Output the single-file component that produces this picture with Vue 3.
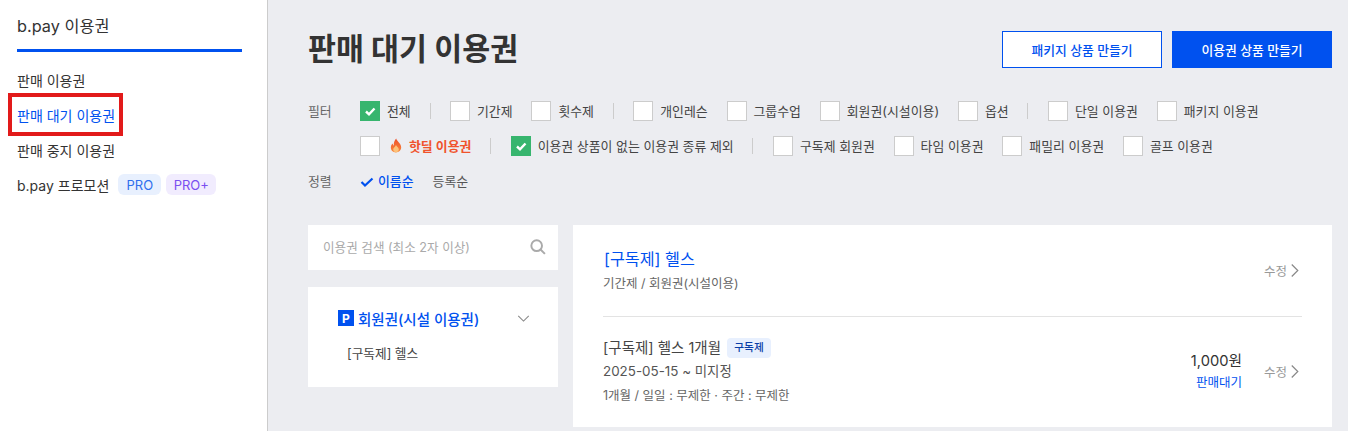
<script setup>
const row1 = [
  { label: '전체', on: true, sep: true },
  { label: '기간제' },
  { label: '횟수제', sep: true },
  { label: '개인레슨' },
  { label: '그룹수업' },
  { label: '회원권(시설이용)' },
  { label: '옵션', sep: true },
  { label: '단일 이용권' },
  { label: '패키지 이용권' },
]
const row2 = [
  { label: '이용권 상품이 없는 이용권 종류 제외', on: true, sep: true },
  { label: '구독제 회원권' },
  { label: '타임 이용권' },
  { label: '패밀리 이용권' },
  { label: '골프 이용권' },
]
</script>

<template>
  <div class="page">
    <aside class="side">
      <h2 class="side-title">b.pay 이용권</h2>
      <nav class="side-nav">
        <a class="nav-item">판매 이용권</a>
        <a class="nav-item active">판매 대기 이용권</a>
        <a class="nav-item">판매 중지 이용권</a>
        <a class="nav-item">b.pay 프로모션
          <span class="pill pro">PRO</span><span class="pill plus">PRO+</span>
        </a>
      </nav>
    </aside>
    <main class="main">
      <header class="head">
        <h1 class="title">판매 대기 이용권</h1>
        <div class="actions">
          <button class="btn outline">패키지 상품 만들기</button>
          <button class="btn solid">이용권 상품 만들기</button>
        </div>
      </header>

      <section class="filters">
        <div class="frow">
          <span class="flabel">필터</span>
          <template v-for="f in row1" :key="f.label">
            <label class="chk"><i class="box" :class="{ on: f.on }"><svg v-if="f.on" viewBox="0 0 20 20"><path d="M6 10.500 9 13.300 14.500 7.500" /></svg></i>{{ f.label }}</label>
            <i v-if="f.sep" class="sep"></i>
          </template>
        </div>
        <div class="frow">
          <span class="flabel"></span>
          <label class="chk hot">
            <i class="box"></i>
            <svg class="fire" viewBox="1 0 12 16">
              <defs>
                <linearGradient id="flame" x1="0" y1="0" x2="0" y2="1">
                  <stop offset="0" stop-color="#ee4f2a"/>
                  <stop offset="1" stop-color="#f98a3c"/>
                </linearGradient>
              </defs>
              <path d="M7.200.6c.5 2.600 4.800 4.800 5.300 9 .3 3.300-2.500 5.800-5.600 5.800C3.800 15.400 1.300 13 1.500 9.900c.1-1.700 1-3.100 1.900-4 .1 1.100.5 1.900 1.200 2.300C4.500 5.300 5.300 2.500 7.200.6Z" fill="url(#flame)"/>
              <path d="M7 7.500c.3 1.300 3 2.600 3 4.800 0 1.600-1.400 2.900-3 2.900s-3-1.300-3-2.900C4 10.500 6.300 9.400 7 7.500Z" fill="#fcc27a"/>
            </svg>
            <b>핫딜 이용권</b>
          </label>
          <i class="sep"></i>
          <template v-for="f in row2" :key="f.label">
            <label class="chk"><i class="box" :class="{ on: f.on }"><svg v-if="f.on" viewBox="0 0 20 20"><path d="M6 10.500 9 13.300 14.500 7.500" /></svg></i>{{ f.label }}</label>
            <i v-if="f.sep" class="sep"></i>
          </template>
        </div>
        <div class="frow">
          <span class="flabel">정렬</span>
          <span class="sort active"><svg viewBox="0 0 14 12"><path d="M1.500 6 5 9.500 12.500 2.500" /></svg>이름순</span>
          <span class="sort">등록순</span>
        </div>
      </section>

      <section class="body">
        <div class="left">
          <div class="search">
            <span>이용권 검색 (최소 2자 이상)</span>
            <svg viewBox="0 0 18 18"><circle cx="7.500" cy="7.500" r="6"/><path d="M11.800 11.800 16.800 16.800"/></svg>
          </div>
          <div class="tree">
            <div class="tree-head">
              <span class="p">P</span><span class="tree-name">회원권(시설 이용권)</span>
              <svg class="chev" viewBox="0 0 14 8"><path d="M1 1 7 7 13 1"/></svg>
            </div>
            <div class="tree-item">[구독제] 헬스</div>
          </div>
        </div>
        <div class="card">
          <div class="card-top">
            <div>
              <h3 class="card-title">[구독제] 헬스</h3>
              <p class="card-sub">기간제 / 회원권(시설이용)</p>
            </div>
            <a class="edit">수정<svg viewBox="0 0 8 14"><path d="M.5.5 7 7 .5 13.500"/></svg></a>
          </div>
          <div class="card-row">
            <div class="info">
              <div class="name">[구독제] 헬스 1개월<span class="tag">구독제</span></div>
              <div class="date">2025-05-15 ~ 미지정</div>
              <div class="limit">1개월 / 일일 : 무제한 · 주간 : 무제한</div>
            </div>
            <div class="price">
              <strong>1,000원</strong>
              <span>판매대기</span>
            </div>
            <a class="edit">수정<svg viewBox="0 0 8 14"><path d="M.5.5 7 7 .5 13.500"/></svg></a>
          </div>
        </div>
      </section>
    </main>
  </div>
</template>

<style>
html, body { margin: 0; background: #ecedf1; }
</style>

<style scoped>
* { box-sizing: border-box; }
.page {
  display: flex;
  width: 1348px;
  height: 431px;
  overflow: hidden;
  font-family: Inter, "Noto Sans CJK KR", sans-serif;
  color: #333;
  background: #ecedf1;
}
.side {
  width: 268px;
  flex: none;
  background: #fff;
  border-right: 1px solid #ccc;
  padding: 0 25px 0 17px;
}
.side-title {
  margin: 0;
  height: 52px;
  border-bottom: 3px solid #0051ef;
  font-size: 16.3px;
  font-weight: 400;
  line-height: 52px;
}
.side-nav { display: flex; flex-direction: column; margin-top: 10px; }
.nav-item {
  height: 35px;
  display: flex;
  align-items: center;
  font-size: 14px;
  white-space: nowrap;
}
.nav-item.active {
  color: #0051ef;
  outline: 4px solid #e21a1a;
  width: 107px;
  margin-left: -5px;
  padding-left: 5px;
}
.pill {
  display: inline-flex;
  align-items: center;
  justify-content: center;
  height: 21px;
  border-radius: 6px;
  font-size: 13px;
}
.pro { width: 43px; margin-left: 9px; background: #e8f0fe; color: #2f6fed; }
.plus { width: 50px; margin-left: 5px; background: #f1ecfe; color: #7a4ff0; }

.main { flex: 1; min-width: 0; padding: 0 16px 0 40px; }
.head {
  display: flex;
  justify-content: space-between;
  align-items: center;
  height: 68px;
  padding-top: 30px;
  margin-bottom: 33px;
}
.title { margin: 0; font-size: 30.4px; font-weight: 700; line-height: 38px; color: #333; }
.actions { display: flex; gap: 10px; }
.btn {
  width: 160px;
  height: 37px;
  font: 500 12.8px Inter, "Noto Sans CJK KR", sans-serif;
  border: 1px solid #0051ef;
  padding: 0;
}
.outline { background: #fff; color: #0051ef; }
.solid { background: #0051ef; color: #fff; }

.filters { display: flex; flex-direction: column; gap: 15px; }
.frow { display: flex; align-items: flex-start; height: 20px; font-size: 12.9px; line-height: 22px; }
.flabel { width: 52px; flex: none; color: #666; }
.chk { display: flex; align-items: flex-start; gap: 7px; margin-right: 18.8px; color: #444; white-space: nowrap; }
.box {
  width: 20px;
  height: 20px;
  flex: none;
  background: #fff;
  border: 1px solid #ccc;
  display: block;
}
.box.on { background: #37b56e; border: 0; }
.box svg { display: block; width: 20px; height: 20px; fill: none; stroke: #fff; stroke-width: 2.400; }
.sep { width: 1px; height: 16px; margin-top: 2px; background: #ccc; margin-right: 19.5px; flex: none; }
.fire { width: 12px; height: 15px; margin: 2px 0 0 3px; }
.hot b { color: #f0532d; font-weight: 700; }
.sort { display: flex; align-items: center; height: 22px; margin-right: 19px; color: #555; }
.sort.active { color: #0051ef; font-weight: 500; }
.sort svg { width: 14px; height: 12px; margin-right: 4px; fill: none; stroke: #0051ef; stroke-width: 2.2; }

.body { display: flex; gap: 15px; margin-top: 34px; align-items: flex-start; }
.left { width: 250px; flex: none; display: flex; flex-direction: column; gap: 17px; }
.search {
  height: 45px;
  background: #fff;
  display: flex;
  align-items: center;
  justify-content: space-between;
  padding: 0 12px 2px 15px;
  font-size: 12.6px;
  color: #aaa;
}
.search svg { width: 16px; height: 16px; fill: none; stroke: #aaa; stroke-width: 2.2; }
.tree { height: 100px; background: #fff; padding: 21px 28px 0 30px; }
.tree-head { display: flex; align-items: center; height: 20px; }
.p {
  width: 16px;
  height: 16px;
  background: #0051ef;
  color: #fff;
  font-size: 12px;
  font-weight: 700;
  display: flex;
  align-items: center;
  justify-content: center;
  margin-right: 4px;
}
.tree-name { flex: 1; font-size: 14.5px; font-weight: 500; color: #0051ef; }
.chev { width: 13px; height: 7px; fill: none; stroke: #888; stroke-width: 1.2; }
.tree-item { margin: 17px 0 0 9px; font-size: 12.7px; line-height: 18px; color: #444; }

.card { flex: 1; background: #fff; padding: 0 30px 0 31px; height: 202px; }
.card-top {
  display: flex;
  justify-content: space-between;
  align-items: center;
  height: 92px;
  border-bottom: 1px solid #e3e3e3;
  margin-left: -1px;
}
.card-title { margin: 0 0 0 1px; font-size: 16.200px; font-weight: 400; color: #0051ef; line-height: 24px; }
.card-sub { margin: 1px 0 -1px; font-size: 12.5px; color: #666; line-height: 24px; }
.edit { display: flex; align-items: center; gap: 4px; margin-right: 3px; font-size: 12.5px; color: #999; }
.edit svg { width: 8px; height: 13px; fill: none; stroke: #888; stroke-width: 1.3; }
.card-row { display: flex; align-items: center; height: 109px; margin-left: -1px; }
.info { flex: 1; }
.name { display: flex; align-items: center; font-size: 14.5px; line-height: 24px; color: #444; }
.tag {
  margin-left: 6px;
  width: 44px;
  height: 20px;
  border-radius: 4px;
  background: #e8f0fe;
  color: #0a3ea8;
  font-size: 10.7px;
  font-weight: 500;
  display: flex;
  align-items: center;
  justify-content: center;
}
.date { margin: -1px 0 1px; font-size: 13.4px; line-height: 24px; color: #555; }
.limit { font-size: 12.5px; line-height: 24px; color: #666; }
.price { display: flex; flex-direction: column; align-items: flex-end; margin-right: 22px; }
.price strong { font-size: 14.7px; font-weight: 400; color: #333; line-height: 22px; }
.price span { font-size: 12.5px; color: #0051ef; line-height: 22px; }
</style>
